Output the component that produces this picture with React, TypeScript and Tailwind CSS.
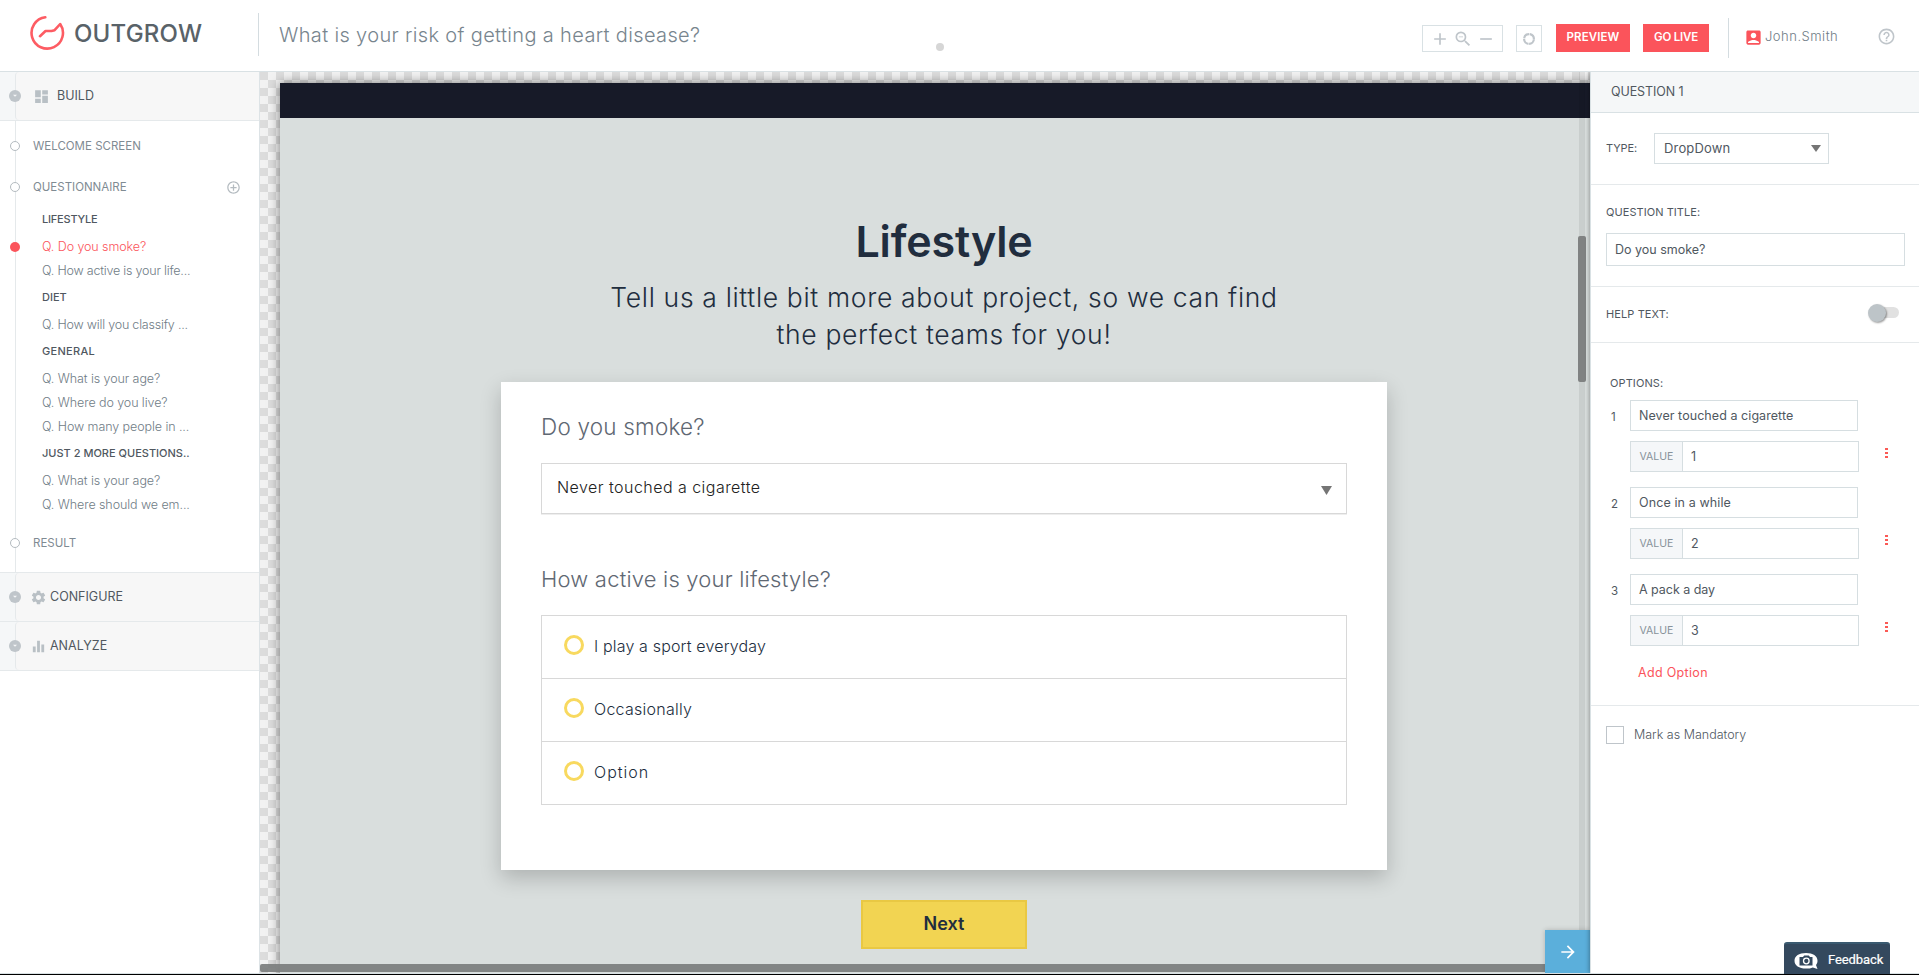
import React from "react";
import {
  MdAccountBox,
  MdAdd,
  MdArrowForward,
  MdControlPoint,
  MdDashboard,
  MdEqualizer,
  MdHelpOutline,
  MdRemove,
  MdSettings,
  MdZoomOut,
} from "react-icons/md";

function Logo() {
  return (
    <svg width="36" height="36" viewBox="0 0 36 36" fill="none" stroke="#fd5c63" strokeWidth="2.6" strokeLinecap="round" strokeLinejoin="round">
      <path d="M16.3 2.3A15.7 15.7 0 1 0 31.2 9L25.6 15.2 22.5 16H16.5L11 21.2" />
    </svg>
  );
}

function Caret({ className }: { className: string }) {
  return (
    <svg viewBox="0 0 10 9" preserveAspectRatio="none" className={className} fill="#757575">
      <path d="M0 0H10L5 9Z" />
    </svg>
  );
}

function GroupHeader({ icon, label }: { icon: React.ReactNode; label: string }) {
  return (
    <div className="flex h-[49px] border-b border-[#e5e9eb] bg-[#f5f7f8] pl-[15px]">
      <div className="flex h-12 flex-1 items-center rounded-l-[4px] border-l border-[#e5e9eb] bg-[#f7f7f7]">
        <span className="-ml-[7px] flex size-3 shrink-0 items-center justify-center rounded-full bg-[#bfc5ca]">
          <svg width="6" height="4" viewBox="0 0 6 4" fill="#f5f7f8">
            <path d="M1 .8H5L3 2.8Z" />
          </svg>
        </span>
        {icon}
        <span className="text-[12.5px] text-[#50585f]">{label}</span>
      </div>
    </div>
  );
}

function Stage({ label, className, action }: { label: string; className: string; action?: React.ReactNode }) {
  return (
    <div className={`flex items-center ${className}`}>
      <span className="-ml-[6px] size-[10px] shrink-0 rounded-full border border-[#b4bbc0] bg-white" />
      <span className="ml-[13px] flex-1 pt-[2px] text-[11.5px] text-[#7f8b93]">{label}</span>
      {action}
    </div>
  );
}

function Section({ label, className = "h-7" }: { label: string; className?: string }) {
  return (
    <div className={`mb-0.5 flex items-center pl-[26px] text-[11px] font-medium text-[#50585f] ${className}`}>{label}</div>
  );
}

function Question({ text, active = false, tight = false }: { text: string; active?: boolean; tight?: boolean }) {
  return (
    <div className="flex h-6 items-center">
      <span className={`-ml-[6px] size-[10px] shrink-0 rounded-full ${active ? "bg-[#fb545b]" : ""}`} />
      <span
        className={`ml-[22px] whitespace-pre text-[12.5px] font-light ${tight ? "tracking-[-0.2px]" : "tracking-[-0.08px]"} ${
          active ? "text-[#fb545b]" : "text-[#6f7c86]"
        }`}
      >
        {text}
      </span>
    </div>
  );
}

function Sidebar() {
  return (
    <aside className="flex w-[260px] shrink-0 flex-col border-r border-[#dde3e6] bg-white">
      <GroupHeader label="BUILD" icon={<MdDashboard className="ml-3 mr-[7px] size-[17px] text-[#b9c0c5]" />} />
      <div className="ml-[15px] border-l border-[#e5e9eb] pb-[3px] pt-1">
        <Stage label="WELCOME SCREEN" className="h-[42px]" />
        <Stage
          label="QUESTIONNAIRE"
          className="h-10"
          action={<MdControlPoint className="mr-[18px] size-[15px] text-[#b4bbc0]" />}
        />
        <Section label="LIFESTYLE" className="h-[26px] pb-[2px] tracking-[-0.2px]" />
        <Question text="Q. Do you smoke?" active />
        <Question text="Q. How active is your life..." tight />
        <Section label="DIET" />
        <Question text="Q. How will you classify ..." tight />
        <Section label="GENERAL" className="h-7 tracking-[0.3px]" />
        <Question text="Q. What is your age?" />
        <Question text="Q. Where do you live?" />
        <Question text="Q. How many people in ..." />
        <Section label="JUST 2 MORE QUESTIONS.." />
        <Question text="Q. What is your age?" />
        <Question text="Q. Where should we em..." />
        <Stage label="RESULT" className="h-[52px]" />
      </div>
      <div className="border-t border-[#e5e9eb]">
        <GroupHeader label="CONFIGURE" icon={<MdSettings className="ml-[9px] mr-[3px] size-[17px] text-[#b9c0c5]" />} />
        <GroupHeader label="ANALYZE" icon={<MdEqualizer className="ml-[9px] mr-[3px] size-[17px] text-[#b9c0c5]" />} />
      </div>
    </aside>
  );
}

function Header() {
  return (
    <header className="relative z-20 flex h-[72px] shrink-0 border-b border-[#d9e1e4] bg-white">
      <div className="flex w-[258px] items-start pl-[29px] pt-[15px]">
        <Logo />
        <span className="ml-[9px] text-[24px] font-medium leading-[37px] tracking-[0.2px] text-[#596268]">OUTGROW</span>
      </div>
      <div className="mt-[13px] h-[43px] w-px bg-[#d4dce0]" />
      <h1 className="ml-5 mt-[15px] text-[20px] font-light leading-[40px] tracking-[0.35px] text-[#78858e]">
        What is your risk of getting a heart disease?
      </h1>
      <span className="absolute left-[936px] top-[43px] size-2 rounded-full bg-[#d6d6d6]" />
      <div className="ml-auto flex items-start">
        <div className="mt-[25px] flex h-[27px] w-[81px] items-center border border-[#d9e1e4] text-[#bfc5ca]">
          <MdAdd className="ml-[7px] size-5 shrink-0" />
          <MdZoomOut className="ml-[3px] size-5 shrink-0" />
          <MdRemove className="ml-[3px] size-5 shrink-0" />
        </div>
        <div className="ml-[13px] mt-[25px] flex h-[27px] w-[26px] items-center justify-center border border-[#d9e1e4]">
          <svg width="14" height="14" viewBox="0 0 14 14" fill="none" stroke="#bfc5ca" strokeWidth="2.2">
            <circle cx="7" cy="7" r="4.9" strokeDasharray="7.1 0.6" strokeDashoffset="-0.3" />
          </svg>
        </div>
        <button className="ml-[14px] mt-6 h-7 w-[74px] bg-[#fb545b] text-[11.5px] font-semibold tracking-[0.1px] text-white">
          PREVIEW
        </button>
        <button className="ml-[13px] mt-6 h-7 w-[66px] bg-[#fb545b] text-[11.5px] font-semibold tracking-[-0.2px] text-white">
          GO LIVE
        </button>
        <div className="ml-[19px] mt-[18px] h-10 w-px bg-[#d4dce0]" />
        <div className="ml-[15px] mt-[27px] flex h-5 items-center">
          <MdAccountBox className="size-[19px] text-[#fb545b]" />
          <span className="ml-[2px] w-[74px] whitespace-nowrap text-[13px] font-light tracking-[0.5px] text-[#6f7c86]">John.Smith</span>
        </div>
        <MdHelpOutline className="ml-[38px] mr-[23px] mt-[27px] size-[19px] text-[#bfc5ca]" />
      </div>
    </header>
  );
}

function Canvas() {
  return (
    <main className="relative flex-1 overflow-hidden bg-[conic-gradient(#f2f2f2_25%,#dcdcdc_0_50%,#f2f2f2_0_75%,#dcdcdc_0)] bg-[length:16px_16px] pl-5 pt-[11px]">
      <div className="flex h-[900px] w-[1328px] flex-col items-center bg-[#d9dedd] shadow-[0_0_10px_rgba(0,0,0,0.5)]">
        <div className="h-[35px] w-full shrink-0 bg-[#171a28]" />
        <h2 className="mt-[93px] text-[43px] font-semibold leading-[60px] tracking-[-0.14px] text-[#212d3e]">Lifestyle</h2>
        <p className="mt-2 text-center text-[26.5px] font-light leading-[37px] tracking-[0.66px] text-[#212d3e]">
          Tell us a little bit more about project, so we can find
          <br />
          the perfect teams for you!
        </p>
        <section className="mt-[29px] w-[886px] shrink-0 bg-white px-10 pb-[65px] pt-[30px] shadow-[0_8px_20px_rgba(0,0,0,0.2)]">
          <h3 className="text-[22.5px] font-light leading-[30px] tracking-[0.2px] text-[#5f6873]">Do you smoke?</h3>
          <div className="mt-[21px] flex h-[51px] items-center border border-[#d8d8d8] pl-[15px] pr-[14px] shadow-[0_1px_0_#eeeeee]">
            <span className="-mt-[3px] flex-1 text-[16px] font-light tracking-[0.46px] text-[#212121]">Never touched a cigarette</span>
            <Caret className="mt-[3px] h-[9px] w-[11px]" />
          </div>
          <h3 className="mt-[50px] text-[22px] font-light leading-[30px] tracking-[0.2px] text-[#5f6873]">
            How active is your lifestyle?
          </h3>
          <ul className="mt-[21px] border border-[#d8d8d8] text-[16px] font-light text-[#212d3e]">
            {[
              ["I play a sport everyday", "tracking-[0.16px]"],
              ["Occasionally", "tracking-[0.26px]"],
              ["Option", "tracking-[1px]"],
            ].map(([text, spacing]) => (
              <li key={text} className="flex h-[63px] items-center border-b border-[#d8d8d8] pl-[22px] last:h-[62px] last:border-b-0">
                <span className="mb-1 size-5 rounded-full border-[3px] border-[#f8d95f]" />
                <span className={`mb-[2px] ml-[10px] ${spacing}`}>{text}</span>
              </li>
            ))}
          </ul>
        </section>
        <button className="mt-[30px] h-[49px] w-[166px] shrink-0 border-2 border-[#e9c843] bg-[#f2d452] pb-[2px] text-[18px] font-semibold text-[#212d3e]">
          Next
        </button>
      </div>
      <div className="absolute bottom-[17px] right-[5px] top-0 w-[6px] rounded-b-[3px] bg-black/[0.07]" />
      <div className="absolute right-1 top-[164px] h-[146px] w-2 rounded-[2px] bg-[#808282]" />
      <div className="absolute bottom-px left-0 h-2 w-[1291px] rounded-[2px] bg-[#7d807f]/95" />
      <button className="absolute bottom-0 right-0 flex h-[43px] w-[45px] items-center justify-center bg-[#5bafdb] text-white shadow-[0_0_5px_rgba(0,0,0,0.2)]">
        <MdArrowForward className="size-5" />
      </button>
    </main>
  );
}

function OptionFields({ index, text, spacing }: { index: number; text: string; spacing: string }) {
  return (
    <div className="flex h-[87px] text-[12.5px] text-[#50585f]">
      <span className="w-5 pl-px pt-[9px] text-[11.5px] leading-4">{index}</span>
      <div className="w-[229px]">
        <div className={`flex h-[31px] w-[228px] items-center border border-[#d6dee1] pl-2 pt-px ${spacing}`}>{text}</div>
        <div className="mt-[10px] flex h-[31px] items-center border border-[#d6dee1]">
          <span className="flex h-full w-[52px] items-center justify-center border-r border-[#d6dee1] bg-[#f5f7f9] text-[10.5px] text-[#87929a]">
            VALUE
          </span>
          <span className="pl-2 pt-px">{index}</span>
        </div>
      </div>
      <div className="ml-[26px] mt-12 flex flex-col gap-[2px]">
        <i className="h-[2px] w-[3px] bg-[#fb5a55]" />
        <i className="h-[2px] w-[3px] bg-[#fb5a55]" />
        <i className="h-[2px] w-[3px] bg-[#fb5a55]" />
      </div>
    </div>
  );
}

function Inspector() {
  return (
    <aside className="z-10 w-[329px] shrink-0 border-l border-[#d9e1e4] bg-white text-[11px] text-[#50585f] shadow-[-1px_0_4px_rgba(0,0,0,0.3)]">
      <div className="flex h-[41px] items-center border-b border-[#d9e1e4] bg-[#f5f7f8] pl-5 text-[12.5px] tracking-[-0.09px]">
        QUESTION 1
      </div>
      <div className="flex h-[72px] items-center border-b border-[#e5e9eb] pl-[15px]">
        <span className="w-12 tracking-[-0.1px]">TYPE:</span>
        <div className="flex h-[31px] w-[175px] items-center justify-between border border-[#d6dee1] pl-[9px] pr-[7px] text-[13px] tracking-[0.16px]">
          DropDown
          <Caret className="h-[7px] w-[10px]" />
        </div>
      </div>
      <div className="h-[102px] border-b border-[#e5e9eb] pl-[15px] pt-[19px]">
        <div className="leading-4 tracking-[0.06px]">QUESTION TITLE:</div>
        <div className="mt-[13px] flex h-[33px] w-[299px] items-center border border-[#d6dee1] pl-2 pt-px text-[12.5px]">Do you smoke?</div>
      </div>
      <div className="flex h-[56px] items-center justify-between border-b border-[#e5e9eb] pl-[15px] pr-5">
        <span className="tracking-[0.1px]">HELP TEXT:</span>
        <span className="mb-1 flex h-[11px] w-[28px] items-center rounded-full bg-[#e1e1e1]">
          <span className="-ml-[3px] size-[18px] shrink-0 rounded-full bg-[#bdc4c8] shadow-[1px_1px_2px_rgba(0,0,0,0.4)]" />
        </span>
      </div>
      <div className="h-[363px] border-b border-[#e5e9eb] pl-[19px] pt-8">
        <div className="mb-[9px] leading-4 tracking-[0.1px]">OPTIONS:</div>
        <OptionFields index={1} text="Never touched a cigarette" spacing="tracking-[0.06px]" />
        <OptionFields index={2} text="Once in a while" spacing="tracking-[0.11px]" />
        <OptionFields index={3} text="A pack a day" spacing="tracking-[-0.04px]" />
        <div className="ml-7 mt-[2px] text-[12.5px] leading-5 tracking-[0.32px] text-[#fb545b]">Add Option</div>
      </div>
      <div className="flex items-center pl-[15px] pt-5">
        <span className="size-[18px] border border-[#bfc5ca]" />
        <span className="ml-[10px] text-[12.5px] font-light">Mark as Mandatory</span>
      </div>
    </aside>
  );
}

export default function App() {
  return (
    <div className="relative flex h-[975px] w-[1919px] flex-col overflow-hidden bg-white font-['Inter',sans-serif]">
      <Header />
      <div className="flex min-h-0 flex-1">
        <Sidebar />
        <Canvas />
        <Inspector />
      </div>
      <div className="z-20 h-[2px] shrink-0 border-b border-black bg-[#d9e1e4]" />
      <div className="absolute bottom-px right-[29px] z-30 flex h-8 w-[106px] items-center rounded-t-[3px] border-t-2 border-[#3a5a70] bg-[#34495e] pl-[10px] font-['Roboto',sans-serif] text-[13px] text-white">
        <svg width="24" height="18" viewBox="0 0 24 18" className="mt-1">
          <path d="M12 1C5 1 .5 4 .5 8.8S5 16.6 12 16.6c2.600 0 5-.4 6.800-1.200L23.500 17l-1.500-4c1-1.100 1.500-2.600 1.500-4.200C23.500 4 19 1 12 1Z" fill="#fff" />
          <path d="M5.500 5H9l1.200-1.500h4.600L16 5h2.500v8.500h-13Z" fill="#34495e" />
          <circle cx="12.300" cy="9" r="2.800" fill="none" stroke="#fff" strokeWidth="1.300" />
        </svg>
        <span className="ml-[10px] mt-[2px] tracking-[-0.1px] [-webkit-text-stroke:0.2px_#fff]">Feedback</span>
      </div>
    </div>
  );
}
